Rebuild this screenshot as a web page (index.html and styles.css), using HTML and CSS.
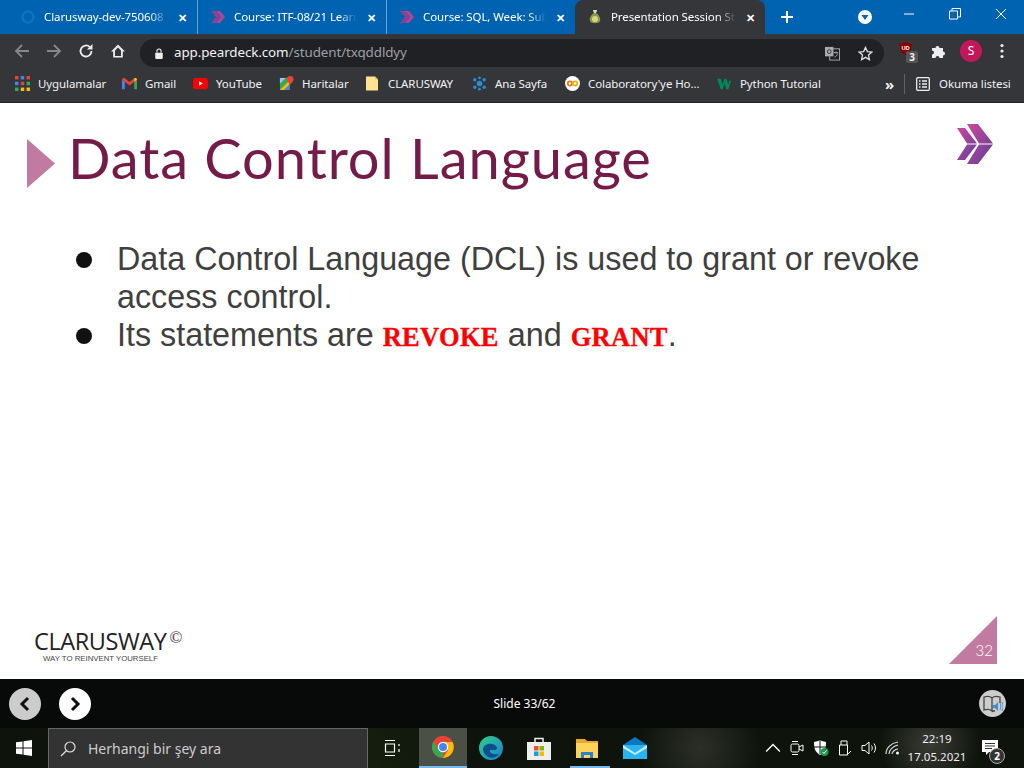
FILE: index.html
```html
<!DOCTYPE html>
<html lang="en">
<head>
    <meta charset="UTF-8">
    <title>Presentation Session</title>
    <link rel="stylesheet" href="styles.css">
</head>
<body>
<div class="tabstrip">
    <div class="tab">
        <svg class="ico" viewBox="0 0 16 16"><circle cx="8" cy="8" r="5.5" fill="none" stroke="#0b75bd" stroke-width="2.4"/></svg>
        <span class="tab-title">Clarusway-dev-750608</span>
        <span class="tab-x">✕</span>
    </div>
    <div class="tab tab-sep">
        <svg class="ico" viewBox="0 0 16 16"><path d="M1 2h5l5 6-5 6H1l5-6z" fill="#8e3f92"/><path d="M6 2h4l5 6-5 6H6l5-6z" fill="#a8489a"/></svg>
        <span class="tab-title">Course: ITF-08/21 Learn</span>
        <span class="tab-x">✕</span>
    </div>
    <div class="tab tab-sep">
        <svg class="ico" viewBox="0 0 16 16"><path d="M1 2h5l5 6-5 6H1l5-6z" fill="#8e3f92"/><path d="M6 2h4l5 6-5 6H6l5-6z" fill="#a8489a"/></svg>
        <span class="tab-title">Course: SQL, Week: Sub</span>
        <span class="tab-x">✕</span>
    </div>
    <div class="tab tab-active">
        <svg class="ico" viewBox="0 0 16 16"><path d="M6 1h4l-1 3c3 2 5 5 4 8-1 3-9 3-10 0-1-3 1-6 4-8z" fill="#8a9a4a"/><circle cx="8" cy="10" r="3" fill="#d9d77a"/><path d="M6 1h4l-1 3H7z" fill="#d8d8c8"/></svg>
        <span class="tab-title">Presentation Session St</span>
        <span class="tab-x">✕</span>
    </div>
    <svg class="new-tab" viewBox="0 0 14 14"><path d="M7 1v12M1 7h12" stroke="#fff" stroke-width="2"/></svg>
    <div class="tab-menu"><svg viewBox="0 0 14 14"><circle cx="7" cy="7" r="7" fill="#fff"/><path d="M3.5 5h7L7 10z" fill="#0063b1"/></svg></div>
    <div class="win-btns">
        <svg viewBox="0 0 12 12"><path d="M1 6h10" stroke="#fff"/></svg>
        <svg viewBox="0 0 12 12"><path d="M.5 3h8v8h-8zM3 3V.5h8.500V9H8.500" fill="none" stroke="#fff"/></svg>
        <svg viewBox="0 0 12 12"><path d="M1 1l10 10M11 1L1 11" stroke="#fff"/></svg>
    </div>
</div>

<div class="toolbar">
    <svg class="tool tool-off" viewBox="0 0 16 16"><path d="M15 8H2M8 2L2 8l6 6" fill="none" stroke="#85878a" stroke-width="1.8"/></svg>
    <svg class="tool tool-off" viewBox="0 0 16 16"><path d="M1 8h13M8 2l6 6-6 6" fill="none" stroke="#85878a" stroke-width="1.8"/></svg>
    <svg class="tool" viewBox="0 0 16 16"><path d="M13.500 8a5.500 5.500 0 1 1-1.600-3.900" fill="none" stroke="#eee" stroke-width="1.800"/><path d="M14.500 1v5.500H9z" fill="#eee"/></svg>
    <svg class="tool" viewBox="0 0 16 16"><path d="M8 1.500L1 8.500h2.200v6h9.600v-6H15z M5 13V7.500l3-3 3 3V13z" fill="#eee" fill-rule="evenodd"/></svg>
    <div class="omnibox">
        <svg class="lock" viewBox="0 0 12 14"><path d="M3.500 6V4a2.500 2.500 0 0 1 5 0v2" fill="none" stroke="#eee" stroke-width="1.300"/><rect x="1.500" y="6" width="9" height="7.500" rx="1" fill="#eee"/></svg>
        <span class="url"><span class="url-host">app.peardeck.com</span>/student/txqddldyy</span>
        <svg class="omni-ico" viewBox="0 0 16 16"><rect x="5" y="3" width="10.500" height="12" fill="none" stroke="#aaa"/><rect x="0" y="1" width="9" height="10" fill="#aaa"/><circle cx="4.500" cy="6" r="2" fill="none" stroke="#333"/><path d="M9 7h5M11.500 6v2M10 12c2-1 3-2 3.500-4" stroke="#aaa" fill="none"/></svg>
        <svg class="omni-ico star" viewBox="0 0 16 16"><path d="M8 1.500l2 4.500 4.800.5-3.600 3.200 1 4.800L8 12.100l-4.200 2.400 1-4.800L1.200 6.500 6 6z" fill="none" stroke="#ddd" stroke-width="1.400"/></svg>
    </div>
    <div class="ext">
        <svg class="ublock" viewBox="0 0 16 16"><path d="M8 1l6.500 2c0 6-1.500 10-6.500 12C3 13 1.500 9 1.500 3z" fill="#800"/><text x="8" y="9.500" class="ublock-txt">UD</text></svg>
        <span class="ext-badge">3</span>
    </div>
    <svg class="tool puzzle" viewBox="0 0 16 16"><path d="M1 5h3.500a2 2 0 1 1 4 0H12v3.500a2 2 0 1 1 0 4V15H8.500a2 2 0 1 0-4 0H1v-3.500a2 2 0 1 0 0-4z" fill="#eee"/></svg>
    <span class="avatar">S</span>
    <svg class="dots" viewBox="0 0 4 16"><circle cx="2" cy="2.500" r="1.600" fill="#eee"/><circle cx="2" cy="8" r="1.600" fill="#eee"/><circle cx="2" cy="13.500" r="1.600" fill="#eee"/></svg>
</div>

<div class="bookmarks">
    <span class="bm bm-apps">
        <svg viewBox="0 0 13 13"><rect width="3" height="3" fill="#e0453a"/><rect x="5" width="3" height="3" fill="#4285f4"/><rect x="10" width="3" height="3" fill="#e0453a"/><rect y="5" width="3" height="3" fill="#4285f4"/><rect x="5" y="5" width="3" height="3" fill="#e0453a"/><rect x="10" y="5" width="3" height="3" fill="#34a853"/><rect y="10" width="3" height="3" fill="#34a853"/><rect x="5" y="10" width="3" height="3" fill="#fbbc05"/><rect x="10" y="10" width="3" height="3" fill="#fbbc05"/></svg>
        Uygulamalar
    </span>
    <span class="bm bm-gmail">
        <svg viewBox="0 0 16 12"><path d="M0 12V2l3 2v8z" fill="#4285f4"/><path d="M16 12V2l-3 2v8z" fill="#34a853"/><path d="M0 2c0-2 2-2.500 3-1.500L8 4.500 13 .5c1-1 3-.5 3 1.500L8 8z" fill="#ea4335"/><path d="M13 .5c1-1 3-.5 3 1.500l-3 2z" fill="#fbbc05"/></svg>
        Gmail
    </span>
    <span class="bm bm-yt">
        <svg viewBox="0 0 16 12"><rect width="16" height="12" rx="3" fill="#f00"/><path d="M6.500 3.500l4 2.500-4 2.500z" fill="#fff"/></svg>
        YouTube
    </span>
    <span class="bm bm-maps">
        <svg viewBox="0 0 16 16"><path d="M1 2h10v13H1z" fill="#34a853"/><path d="M1 15L11 5v10z" fill="#fbbc05"/><path d="M5 15l6-6v6z" fill="#4285f4"/><path d="M1 2h6L1 8z" fill="#9ec5f5"/><path d="M12 0a3.500 3.500 0 0 1 3.500 3.500C15.500 6 12 9 12 9S8.500 6 8.500 3.500A3.500 3.500 0 0 1 12 0z" fill="#ea4335"/></svg>
        Haritalar
    </span>
    <span class="bm bm-clarus">
        <svg viewBox="0 0 12 14"><path d="M0 0h9l3 3v11H0z" fill="#fde293"/><path d="M9 0l3 3H9z" fill="#e8c860"/></svg>
        CLARUSWAY
    </span>
    <span class="bm bm-ana">
        <svg viewBox="0 0 16 16"><g fill="#2a8fd0"><circle cx="8" cy="8" r="3"/><circle cx="3" cy="4" r="1.800"/><circle cx="13" cy="4" r="1.800"/><circle cx="3" cy="12" r="1.800"/><circle cx="13" cy="12" r="1.800"/><circle cx="8" cy="2" r="1.500"/><circle cx="8" cy="14" r="1.500"/></g></svg>
        Ana Sayfa
    </span>
    <span class="bm bm-colab">
        <svg viewBox="0 0 16 16"><circle cx="8" cy="8" r="8" fill="#fff"/><circle cx="5.200" cy="8" r="2.300" fill="none" stroke="#e8710a" stroke-width="1.700"/><circle cx="10.800" cy="8" r="2.300" fill="none" stroke="#f9ab00" stroke-width="1.700"/></svg>
        Colaboratory'ye Ho...
    </span>
    <span class="bm bm-w3">
        <svg viewBox="0 0 16 12"><path d="M0 1h4l2 6 2-6h2l2 6 1-4h2l-3 9h-2L8 6l-2 6H4z" fill="#04885b"/></svg>
        Python Tutorial
    </span>
    <span class="bm-more">»</span>
    <span class="bm-sep"></span>
    <span class="bm bm-read">
        <svg viewBox="0 0 14 14"><rect x=".700" y=".700" width="12.600" height="12.600" rx="1" fill="none" stroke="#eee" stroke-width="1.300"/><path d="M3 4h1.500M6 4h5M3 7h1.500M6 7h5M3 10h1.500M6 10h5" stroke="#eee" stroke-width="1.300"/></svg>
        Okuma listesi
    </span>
</div>

<div class="slide">
    <div class="slide-head">
        <span class="head-arrow"></span>
        <h1 class="slide-title">Data Control Language</h1>
        <svg class="head-logo" viewBox="0 0 36 40">
            <defs>
                <linearGradient id="chev" x1="0" y1="0" x2="1" y2="1">
                    <stop offset="0" stop-color="#d0479a"/>
                    <stop offset="1" stop-color="#5b3f9b"/>
                </linearGradient>
            </defs>
            <path d="M0 4h8l12 15.500H10zM10 20.500h10L8 36H0z" fill="url(#chev)"/>
            <path d="M10 0h11l15 19.500H22zM22 20.500h14L21 40H10z" fill="url(#chev)"/>
        </svg>
    </div>
    <ul class="points">
        <li>Data Control Language (DCL) is used to grant or revoke access control.</li>
        <li>Its statements are <code>REVOKE</code> and <code>GRANT</code>.</li>
    </ul>
    <div class="slide-foot">
        <div class="brand">
            <div class="brand-name">CLARUSWAY<sup>©</sup></div>
            <div class="brand-tag">WAY TO REINVENT YOURSELF</div>
        </div>
        <div class="page-no">32</div>
    </div>
</div>

<div class="controls">
    <div class="nav-btns">
        <span class="nav-btn nav-prev"><svg viewBox="0 0 12 16"><path d="M9 2L3 8l6 6" fill="none" stroke="#111" stroke-width="3"/></svg></span>
        <span class="nav-btn"><svg viewBox="0 0 12 16"><path d="M3 2l6 6-6 6" fill="none" stroke="#111" stroke-width="3"/></svg></span>
    </div>
    <div class="slide-count">Slide 33/62</div>
    <span class="read-btn">
        <svg viewBox="0 0 20 20"><path d="M1 3c3-1 6-1 8 1v13c-2-2-5-2-8-1zM9 4c2-2 5-2 8-1v6M9 17h3" fill="none" stroke="#444" stroke-width="1.300"/><path d="M10 11h2l3-3v9l-3-3h-2z" fill="#3d8fd6"/><path d="M17 9c1 2 1 4 0 7M19 8c1.500 3 1.500 6 0 9" fill="none" stroke="#3d8fd6"/></svg>
    </span>
</div>

<div class="taskbar">
    <span class="tb-start"><svg viewBox="0 0 16 16"><path d="M0 2.300L6.500 1.400V7.500H0zM7.500 1.200L16 0v7.500H7.500zM0 8.500h6.500v6.100L0 13.700zM7.500 8.500H16V16l-8.500-1.200z" fill="#fff"/></svg></span>
    <div class="tb-search">
        <svg viewBox="0 0 16 16"><circle cx="10" cy="6" r="5" fill="none" stroke="#ddd" stroke-width="1.200"/><path d="M6.300 9.700L1 15" stroke="#ddd" stroke-width="1.300"/></svg>
        Herhangi bir şey ara
    </div>
    <span class="tb-cell tb-view"><svg viewBox="0 0 16 16"><path d="M1 .5h10M1 15.500h10M1.500 4h9v8h-9zM15 4v2M15 9v3" fill="none" stroke="#fff" stroke-width="1.200"/></svg></span>
    <span class="tb-cell tb-chrome">
        <svg viewBox="0 0 24 24"><circle cx="12" cy="12" r="11" fill="#ea4335"/><path d="M12 23A11 11 0 0 1 2.500 6.500L8 15l4 1z" fill="#34a853"/><path d="M12 7h9.500A11 11 0 0 1 12 23l5-8z" fill="#fbbc05"/><circle cx="12" cy="12" r="5.200" fill="#fff"/><circle cx="12" cy="12" r="4" fill="#4285f4"/></svg>
    </span>
    <span class="tb-cell">
        <svg viewBox="0 0 24 24"><defs><linearGradient id="edge" x1="0" y1="0" x2="1" y2="1"><stop offset="0" stop-color="#2fd08a"/><stop offset="1" stop-color="#1b7fd0"/></linearGradient></defs><circle cx="12" cy="12" r="12" fill="url(#edge)"/><path d="M4 13c1-5 9-7 13-3 2 2 1 4-2 4h-4c-1 3 3 5 9 4-4 6-15 5-16-5z" fill="#0b4f8f"/></svg>
    </span>
    <span class="tb-cell">
        <svg viewBox="0 0 24 24"><path d="M8 6V2.500h8V6" fill="none" stroke="#eee" stroke-width="1.500"/><rect y="6" width="24" height="18" fill="#eee"/><rect x="7" y="10" width="4.500" height="4.500" fill="#f25022"/><rect x="12.500" y="10" width="4.500" height="4.500" fill="#7fba00"/><rect x="7" y="15.500" width="4.500" height="4.500" fill="#00a4ef"/><rect x="12.500" y="15.500" width="4.500" height="4.500" fill="#ffb900"/></svg>
    </span>
    <span class="tb-cell tb-files">
        <svg viewBox="0 0 24 24"><path d="M1 3h9l2 2h11v17H1z" fill="#e8a92c"/><rect x="1" y="7" width="22" height="15" fill="#fcd35b"/><path d="M6 22v-6h12v6h-3v-3H9v3z" fill="#2a83c8"/></svg>
    </span>
    <span class="tb-cell">
        <svg viewBox="0 0 24 24"><path d="M12 1l12 8v3H0V9z" fill="#0b78c4"/><rect y="9" width="24" height="14" fill="#28b4f0"/><path d="M0 9l12 8 12-8v3l-12 7L0 12z" fill="#c6ecfb"/></svg>
    </span>
    <div class="tray">
        <svg class="tray-ico" viewBox="0 0 14 14"><path d="M1 10l6-6 6 6" fill="none" stroke="#fff" stroke-width="1.200"/></svg>
        <svg class="tray-ico" viewBox="0 0 14 16"><rect x="1" y="4" width="8" height="8" rx="1.500" fill="none" stroke="#fff"/><path d="M9 7l4-2v6l-4-2M2 1.500h6M2 14.500h6" fill="none" stroke="#fff"/></svg>
        <svg class="tray-ico" viewBox="0 0 16 16"><path d="M1 2l6-1.500L13 2c0 6-1 10-6 13C2 12 1 8 1 2z" fill="#fff"/><path d="M1 7h12M7 1v13" stroke="#111"/><circle cx="11.500" cy="12" r="4" fill="#1a9a50"/><path d="M9.500 12l1.500 1.500 2.500-3" fill="none" stroke="#fff"/></svg>
        <svg class="tray-ico" viewBox="0 0 14 16"><path d="M3 5V1h6v4M1.500 5h8v10h-8zM10 14l3-3" fill="none" stroke="#fff"/></svg>
        <svg class="tray-ico" viewBox="0 0 16 16"><path d="M1 5.500h3L8 2v12L4 10.500H1z" fill="none" stroke="#fff"/><path d="M10.500 5.500c1 1.500 1 3.500 0 5M13 3.500c2 3 2 6 0 9" fill="none" stroke="#fff"/></svg>
        <svg class="tray-ico" viewBox="0 0 16 16"><path d="M1 14C1 8 6 3 13 2M4 14c0-4 4-8 9-9M7 14c0-2 3-5 6-5" fill="none" stroke="#ddd" stroke-width="1.100"/><circle cx="12.500" cy="13" r="1.500" fill="#fff"/></svg>
    </div>
    <div class="clock">
        <div>22:19</div>
        <div>17.05.2021</div>
    </div>
    <div class="notif">
        <svg viewBox="0 0 16 16"><path d="M0 0h16v12H7l-3 3v-3H0z" fill="#fff"/><path d="M3 3.500h10M3 6h10M3 8.500h7" stroke="#333"/></svg>
        <span class="notif-count">2</span>
    </div>
    <span class="tb-edge"></span>
</div>
</body>
</html>
```

FILE: styles.css
```css
* {
    padding: 0;
    margin: 0;
    box-sizing: border-box;
}

body {
    width: 1024px;
    height: 768px;
    overflow: hidden;
    display: flex;
    flex-direction: column;
    font-family: "Noto Sans", "Open Sans", sans-serif;
    font-size: 12px;
    color: #fff;
    background: #fff;
}

svg {
    display: block;
}

/* tabs */
.tabstrip {
    height: 34px;
    background: #0063b1;
    display: flex;
    align-items: center;
    padding-left: 8px;
}

.tab {
    width: 189px;
    height: 34px;
    display: flex;
    align-items: center;
    padding: 0 9px 0 12px;
    gap: 8px;
    flex: none;
}

.tab .ico {
    width: 16px;
    height: 16px;
    flex: none;
}

.tab-sep {
    border-left: 1px solid #6aa3d2;
    background-clip: padding-box;
}

.tab-active {
    background: #35363a;
    border-radius: 8px 8px 0 0;
    width: 190px;
}

.tab-title {
    flex: 1;
    min-width: 0;
    white-space: nowrap;
    overflow: hidden;
    font-size: 11.500px;
    letter-spacing: -0.1px;
    padding-bottom: 2px;
    -webkit-mask-image: linear-gradient(to right, #000 85%, transparent 100%);
    mask-image: linear-gradient(to right, #000 85%, transparent 100%);
}

.tab-x {
    font-size: 11px;
    font-weight: bold;
    width: 12px;
    flex: none;
    text-align: center;
}

.new-tab {
    width: 14px;
    height: 14px;
    margin-left: 15px;
}

.tab-menu {
    margin-left: 64px;
}

.tab-menu svg {
    width: 14px;
    height: 14px;
}

.win-btns {
    display: flex;
    margin-left: 31px;
    gap: 34px;
    margin-top: -6px;
}

.win-btns svg {
    width: 12px;
    height: 12px;
}

/* toolbar */
.toolbar {
    height: 34px;
    background: #35363a;
    display: flex;
    align-items: center;
    padding-left: 14px;
}

.tool {
    width: 16px;
    height: 16px;
    flex: none;
    margin-right: 16px;
}

.omnibox {
    width: 744px;
    height: 28px;
    margin-left: -2px;
    margin-top: 4px;
    border-radius: 14px;
    background: #202124;
    display: flex;
    align-items: center;
    padding-left: 14px;
    color: #9aa0a6;
    font-size: 13.400px;
}

.lock {
    width: 10px;
    height: 13px;
    margin-right: 10px;
}

.url {
    flex: 1;
    letter-spacing: -0.1px;
    padding-bottom: 2px;
}

.url-host {
    color: #f1f3f4;
}

.omni-ico {
    width: 15px;
    height: 15px;
    margin-right: 18px;
}

.omni-ico.star {
    width: 15px;
    height: 15px;
    margin-right: 11px;
}

.ext {
    width: 20px;
    height: 20px;
    margin-left: 14px;
    margin-right: 13px;
    position: relative;
}

.ublock {
    width: 15px;
    height: 15px;
}

.ublock-txt {
    font-size: 6px;
    font-weight: bold;
    fill: #fff;
    text-anchor: middle;
    font-family: "Liberation Sans", sans-serif;
}

.ext-badge {
    position: absolute;
    left: 8px;
    top: 10px;
    width: 12px;
    height: 12px;
    background: #555;
    border-radius: 2px;
    color: #eee;
    font-size: 10px;
    font-weight: bold;
    line-height: 12px;
    text-align: center;
}

.puzzle {
    margin-right: 13px;
}

.avatar {
    width: 22px;
    height: 22px;
    border-radius: 50%;
    background: #c2185b;
    font-size: 12px;
    line-height: 22px;
    text-align: center;
    margin-right: 18px;
}

.dots {
    width: 4px;
    height: 16px;
}

/* bookmarks */
.bookmarks {
    height: 35px;
    background: #35363a;
    border-bottom: 1px solid #202124;
    display: flex;
    align-items: center;
    padding: 0 0 3px 15px;
    color: #f1f3f4;
    font-size: 11.500px;
}

.bm {
    display: flex;
    align-items: center;
    white-space: nowrap;
    letter-spacing: -0.1px;
}

.bm svg {
    width: 15px;
    height: 15px;
    flex: none;
    margin-right: 8px;
}

.bm-apps { width: 107px; }
.bm-gmail { width: 71px; }
.bm-yt { width: 86px; }
.bm-maps { width: 87px; }
.bm-clarus { width: 106px; }
.bm-ana { width: 93px; }
.bm-colab { width: 152px; }
.bm-w3 { width: 168px; }

.bm-clarus svg {
    width: 12px;
    margin-right: 10px;
}

.bm-more {
    font-size: 15px;
    font-weight: bold;
    width: 19px;
}

.bm-sep {
    width: 1px;
    height: 20px;
    background: #5f6368;
    margin-right: 11px;
}

.bm-read svg {
    width: 14px;
    height: 14px;
    margin-right: 9px;
}

/* slide */
.slide {
    flex: 1;
    min-height: 0;
    background: #fff;
    display: flex;
    flex-direction: column;
    color: #3f3f3f;
}

.slide-head {
    display: flex;
    align-items: flex-start;
    padding: 20px 31px 0 27px;
    height: 118px;
}

.head-arrow {
    width: 28px;
    height: 49px;
    margin-top: 16px;
    background: #c27ba0;
    clip-path: polygon(0 0, 100% 50%, 0 100%);
}

.slide-title {
    flex: 1;
    margin-left: 13px;
    font-family: Lato, "Open Sans", sans-serif;
    font-size: 56px;
    line-height: 70px;
    font-weight: 400;
    letter-spacing: 0.950px;
    color: #741b47;
}

.head-logo {
    width: 36px;
    height: 40px;
    margin-top: 1px;
}

.points {
    flex: 1;
    list-style: none;
    padding: 19px 90px 0 117px;
    font-family: "Liberation Sans", sans-serif;
    font-size: 32.300px;
    line-height: 38px;
}

.points li {
    position: relative;
}

.points li::before {
    content: "";
    position: absolute;
    left: -41px;
    top: 12px;
    width: 16px;
    height: 16px;
    border-radius: 50%;
    background: #111;
}

.points code {
    font-family: "Liberation Serif", serif;
    font-size: 26.500px;
    font-weight: bold;
    letter-spacing: 0.300px;
    -webkit-text-stroke: 0.300px #f00;
    color: #f00;
}

.slide-foot {
    display: flex;
    justify-content: space-between;
    align-items: flex-end;
    padding: 0 27px 15px 34px;
}

.brand {
    color: #222;
}

.brand-name {
    font-family: "Open Sans", sans-serif;
    font-size: 23.500px;
    line-height: 24px;
    letter-spacing: -0.4px;
}

.brand-name sup {
    font-family: "Liberation Serif", serif;
    font-size: 17px;
    line-height: 0;
    vertical-align: 7px;
    margin-left: 3px;
    color: #333;
}

.brand-tag {
    font-family: "Liberation Sans", sans-serif;
    font-size: 7.800px;
    line-height: 10px;
    margin-left: 9px;
    margin-top: 1px;
    color: #444;
}

.page-no {
    width: 48px;
    height: 48px;
    background: #c27ba0;
    clip-path: polygon(100% 0, 100% 100%, 0 100%);
    color: #fff;
    font-family: Lato, sans-serif;
    font-size: 15px;
    font-weight: 300;
    display: flex;
    justify-content: flex-end;
    align-items: flex-end;
    padding: 0 4px 5px 0;
}

/* slide controls */
.controls {
    height: 49px;
    background: #080a0a;
    display: grid;
    grid-template-columns: 1fr auto 1fr;
    align-items: center;
    padding: 0 18px 0 9px;
}

.nav-btns {
    display: flex;
    gap: 18px;
}

.nav-btn {
    width: 32px;
    height: 32px;
    border-radius: 50%;
    background: #fff;
    display: flex;
    align-items: center;
    justify-content: center;
}

.nav-prev {
    background: #ccc;
}

.nav-btn svg {
    width: 12px;
    height: 16px;
}

.slide-count {
    font-size: 12px;
    padding-left: 34px;
}

.read-btn {
    justify-self: end;
    width: 27px;
    height: 27px;
    border-radius: 50%;
    background: #ccc;
    display: flex;
    align-items: center;
    justify-content: center;
}

.read-btn svg {
    width: 20px;
    height: 20px;
}

/* windows taskbar */
.taskbar {
    height: 40px;
    display: flex;
    align-items: center;
    background:
        radial-gradient(circle at 700px 20px, #2c2f28 0, transparent 60px),
        radial-gradient(circle at 930px 15px, #3a3c36 0, transparent 50px),
        radial-gradient(circle at 350px 30px, #17200f 0, transparent 120px),
        #0e140c;
    font-family: "Noto Sans", sans-serif;
}

.tb-start {
    width: 48px;
    flex: none;
    display: flex;
    justify-content: center;
}

.tb-start svg {
    width: 16px;
    height: 16px;
}

.tb-search {
    width: 320px;
    height: 40px;
    flex: none;
    background: #333;
    border: 1px solid #666;
    border-bottom: 0;
    display: flex;
    align-items: center;
    padding-left: 11px;
    gap: 12px;
    font-size: 14px;
    color: #ccc;
}

.tb-search svg {
    width: 16px;
    height: 16px;
}

.tb-cell {
    width: 48px;
    height: 40px;
    flex: none;
    display: flex;
    align-items: center;
    justify-content: center;
}

.tb-cell svg {
    width: 24px;
    height: 24px;
}

.tb-view svg {
    width: 16px;
    height: 16px;
}

.tb-chrome {
    margin-left: 3px;
    background: #4a5046;
    border-bottom: 2px solid #76b9ed;
}

.tb-files {
    background: linear-gradient(#76b9ed, #76b9ed) right 1px bottom / 40px 2px no-repeat;
}

.tray {
    display: flex;
    align-items: center;
    gap: 8px;
    margin-left: 106px;
    flex: none;
}

.tray-ico {
    width: 16px;
    height: 16px;
}

.clock {
    width: 72px;
    flex: none;
    text-align: center;
    font-size: 11.500px;
    line-height: 18px;
    color: #eee;
}

.notif {
    width: 44px;
    height: 24px;
    flex: none;
    margin-left: 9px;
    padding-top: 4px;
    position: relative;
}

.notif svg {
    width: 16px;
    height: 16px;
}

.notif-count {
    position: absolute;
    left: 7px;
    top: 12px;
    width: 16px;
    height: 16px;
    border-radius: 50%;
    border: 1px solid #aaa;
    background: #333;
    font-size: 10px;
    font-weight: bold;
    line-height: 14px;
    text-align: center;
}

.tb-edge {
    width: 1px;
    height: 40px;
    flex: none;
    background: #555;
}
```
